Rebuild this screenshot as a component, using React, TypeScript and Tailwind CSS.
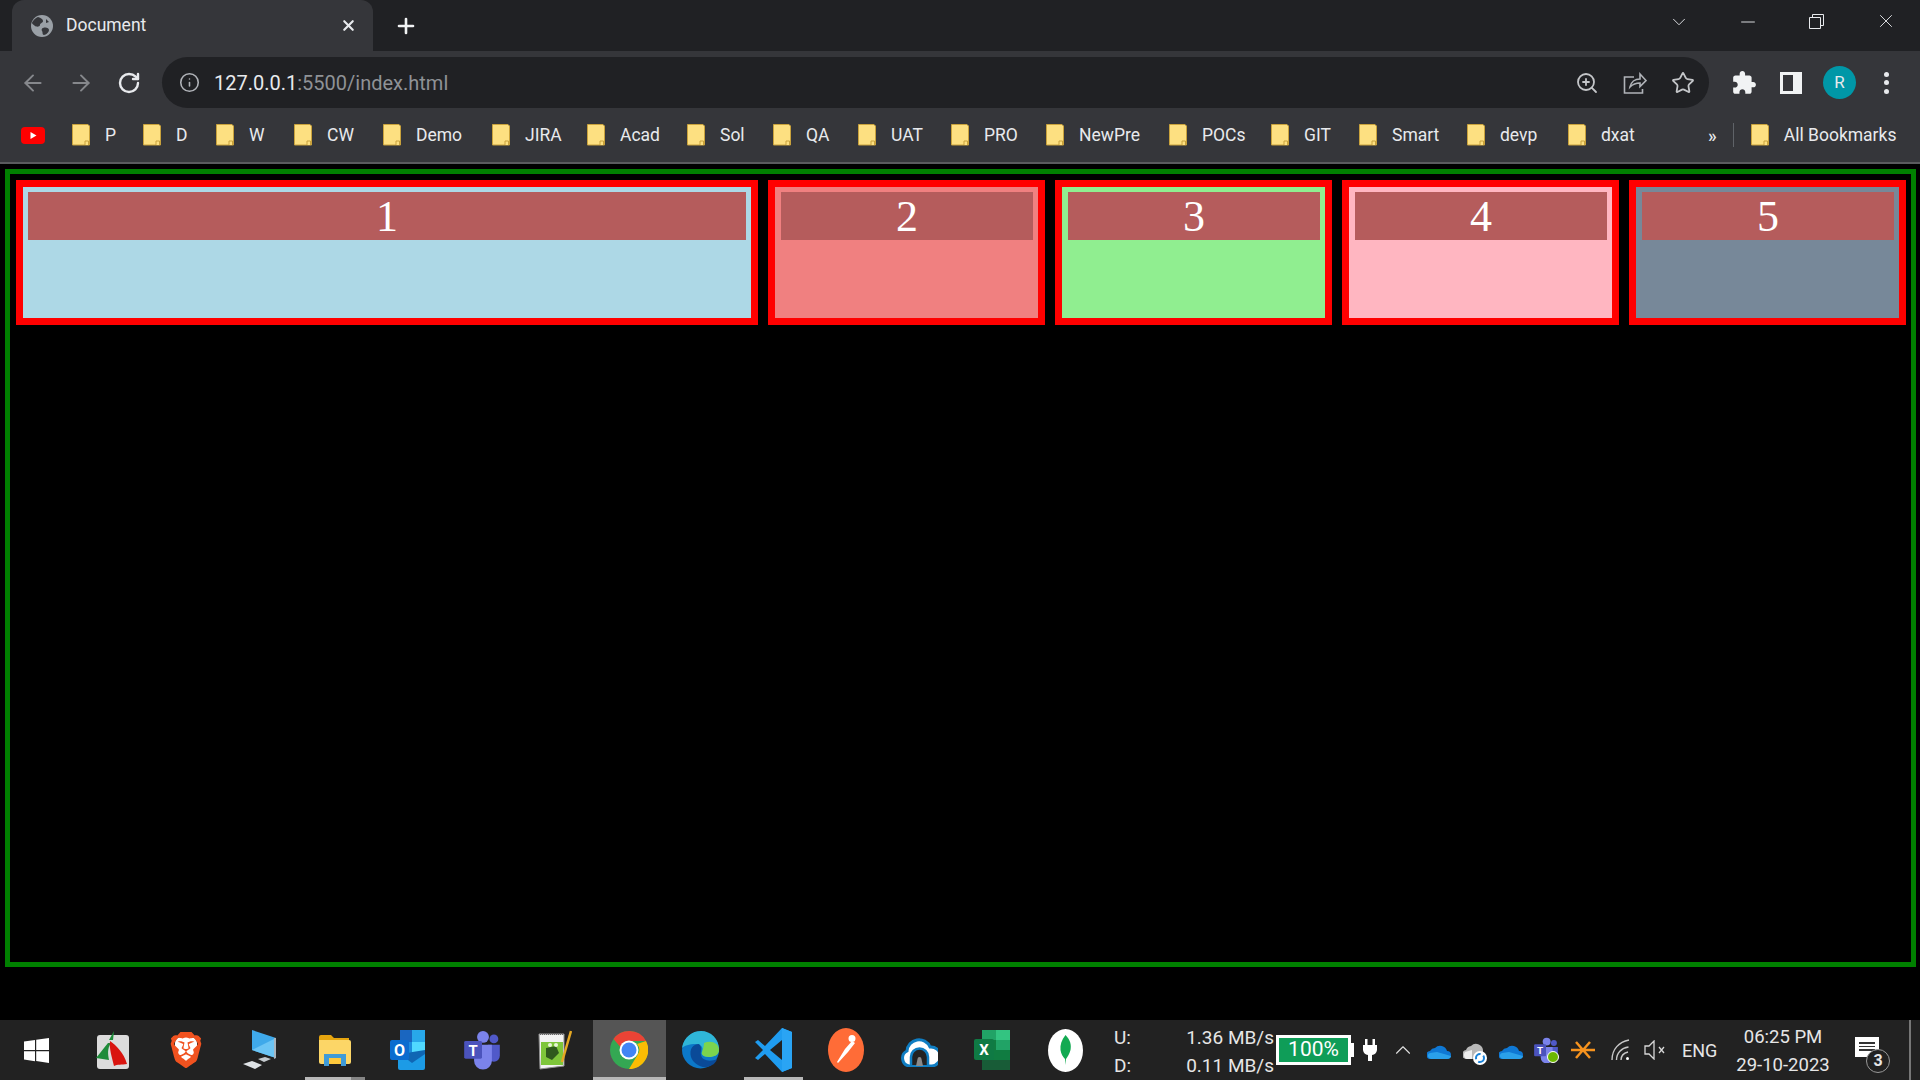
import React from "react";
import { ArrowLeft, ArrowRight, RotateCw, Info, ZoomIn, Star, X, Plus, ChevronDown, ChevronUp, Minus } from "lucide-react";
import { SiBrave } from "react-icons/si";

const bookmarks = [
  { label: "P", w: "w-[71px]" },
  { label: "D", w: "w-[73px]" },
  { label: "W", w: "w-[78px]" },
  { label: "CW", w: "w-[89px]" },
  { label: "Demo", w: "w-[109px]" },
  { label: "JIRA", w: "w-[95px]" },
  { label: "Acad", w: "w-[100px]" },
  { label: "Sol", w: "w-[86px]" },
  { label: "QA", w: "w-[85px]" },
  { label: "UAT", w: "w-[93px]" },
  { label: "PRO", w: "w-[95px]" },
  { label: "NewPre", w: "w-[123px]" },
  { label: "POCs", w: "w-[102px]" },
  { label: "GIT", w: "w-[88px]" },
  { label: "Smart", w: "w-[108px]" },
  { label: "devp", w: "w-[101px]" },
  { label: "dxat", w: "w-[140px]" },
];

const cards = [
  { n: 1, cls: "w-[742px] bg-[#add8e6] pl-[5px]" },
  { n: 2, cls: "flex-1 bg-[#f08080] pl-[6px]" },
  { n: 3, cls: "flex-1 bg-[#90ee90] pl-[6px]" },
  { n: 4, cls: "flex-1 bg-[#ffb6c1] pl-[6px]" },
  { n: 5, cls: "flex-1 bg-[#778899] pl-[6px]" },
];

const Folder = () => (
  <svg width="18" height="22" viewBox="0 0 18 22" className="shrink-0">
    <path d="M.5.5h15.500l1.500 1.500v19H.5z" fill="#fde081" stroke="#c9a23c" />
    <path d="M13 21v-4h3.500v4" fill="#fde081" stroke="#c9a23c" />
  </svg>
);

const Globe = () => (
  <svg width="22" height="22" viewBox="0 0 22 22">
    <circle cx="11" cy="11" r="11" fill="#9aa0a6" />
    <path d="M7 2c3 1 5 2 5 4s-3 2-3 4-4 2-5 1-3-2-3-3 3-5 6-6zM12 13c3-1 6 0 6 2s-3 5-5 5-1-3-2-4 0-3 1-3zM15 4l3 3-3 1z" fill="#35363a" />
  </svg>
);

const Share = () => (
  <svg width="24" height="22" viewBox="0 0 24 22" fill="none" stroke="#b0b3b8" strokeWidth="1.600">
    <path d="M11 5H1.500v16h18v-4" />
    <path d="M7 15c1-5 5-8 10-8V2l6 6.500-6 6V11c-4 0-7 1-10 4z" />
  </svg>
);

const Puzzle = () => (
  <svg width="26" height="26" viewBox="0 0 24 24" fill="#f1f3f4">
    <path d="M20.500 11H19V7c0-1.100-.9-2-2-2h-4V3.500C13 2.120 11.880 1 10.500 1S8 2.120 8 3.500V5H4c-1.100 0-1.990.9-1.990 2v3.800H3.500c1.490 0 2.700 1.210 2.700 2.700s-1.210 2.700-2.700 2.700H2V20c0 1.100.9 2 2 2h3.800v-1.500c0-1.490 1.210-2.700 2.700-2.700 1.490 0 2.700 1.210 2.700 2.700V22H17c1.100 0 2-.9 2-2v-4h1.500c1.380 0 2.500-1.120 2.500-2.500S21.880 11 20.500 11z" />
  </svg>
);

const Windows = () => (
  <svg width="25" height="25" viewBox="0 0 25 25" fill="#fff">
    <path d="M0 3.600 11 2v10H0zM12.200 1.800 25 0v12H12.200zM0 13.200h11v10L0 21.600zM12.200 13.200H25V25l-12.800-1.900z" />
  </svg>
);

const FastStone = () => (
  <svg width="34" height="38" viewBox="0 0 34 38">
    <rect x="1" y="4" width="32" height="34" rx="3" fill="#dcdcdc" />
    <path d="M12 12C7 18 4 22 0 27l13 2c-1-6-2-11 2-17z" fill="#1e8c3a" />
    <path d="M14 10c6 4 14 12 17 23-5 1-10 0-13 2-2-9-5-17-4-25z" fill="#d9140f" />
    <path d="M13 9l5-9-1 9z" fill="#1e8c3a" />
  </svg>
);

const Brave = () => (
  <div className="relative w-[30px] h-[36px]">
    <div className="absolute left-[4px] top-[5px] w-[22px] h-[24px] bg-white rounded-[6px]" />
    <SiBrave className="absolute -left-[3px] top-0 text-[#f1521f]" size={36} />
  </div>
);

const Computer = () => (
  <svg width="34" height="40" viewBox="0 0 34 40">
    <path d="M9 0l24 8v20L9 20z" fill="#3fa9ea" />
    <path d="M9 20l24-12v20z" fill="#6cc5f5" />
    <path d="M33 8v20l-2 1V8z" fill="#a8b4bd" />
    <path d="M0 34l9-3 10 4-7 4z" fill="#dfe3e6" />
    <path d="M15 29l7-2 6 2-7 3z" fill="#c5cace" />
  </svg>
);

const Explorer = () => (
  <svg width="32" height="32" viewBox="0 0 32 32">
    <path d="M0 3a2 2 0 0 1 2-2h10l3 3h15v6H0z" fill="#e6a50f" />
    <path d="M0 6h30a2 2 0 0 1 2 2v20a2 2 0 0 1-2 2H2a2 2 0 0 1-2-2z" fill="#fcd667" />
    <path d="M5 32V20h22v12h-5v-7H10v7z" fill="#3f9bd8" />
    <rect x="10" y="24" width="12" height="6" fill="#ffc93c" />
  </svg>
);

const Outlook = () => (
  <svg width="36" height="40" viewBox="0 0 36 40">
    <rect x="10" y="0" width="25" height="12" fill="#1a66c0" />
    <rect x="10" y="12" width="12" height="11" fill="#1b8bdd" />
    <rect x="22" y="0" width="13" height="12" fill="#28a8ea" />
    <rect x="22" y="12" width="13" height="11" fill="#50d9ff" />
    <path d="M8 22h27v16a2 2 0 0 1-2 2H10a2 2 0 0 1-2-2z" fill="#1c9be6" />
    <path d="M10 24l25-4v4L22 33z" fill="#0f66b4" />
    <rect x="0" y="10" width="19" height="20" rx="2" fill="#0a6ccf" />
    <text x="9.500" y="26" textAnchor="middle" fontSize="16" fontWeight="700" fill="#fff" fontFamily="Roboto, sans-serif">O</text>
  </svg>
);

const Teams = ({ size = 36 }: { size?: number }) => (
  <svg width={size} height={size * 1.1} viewBox="0 0 36 40">
    <circle cx="30" cy="9" r="4.500" fill="#5059c9" />
    <path d="M24 15h12v11a6 6 0 0 1-12 0z" fill="#5059c9" />
    <circle cx="19" cy="7" r="6" fill="#7b83eb" />
    <path d="M10 15h18v16a9 9 0 0 1-18 0z" fill="#7b83eb" />
    <rect x="0" y="11" width="18" height="18" rx="1.500" fill="#4b53bc" />
    <text x="9" y="26" textAnchor="middle" fontSize="15" fontWeight="700" fill="#fff" fontFamily="Roboto, sans-serif">T</text>
  </svg>
);

const NotepadPP = () => (
  <svg width="34" height="40" viewBox="0 0 34 40">
    <path d="M1 4h25v32L2 39z" fill="#f2f2f2" stroke="#8f8f8f" />
    <path d="M2 4h24" stroke="#666" strokeWidth="2" strokeDasharray="1 1" />
    <rect x="3" y="12" width="22" height="23" fill="#7ec63a" />
    <path d="M8 18l10-2 3 7-7 7-6-3z" fill="#2f5a1d" />
    <circle cx="12" cy="15" r="2" fill="#e8f5d8" />
    <circle cx="18" cy="15" r="2" fill="#e8f5d8" />
    <path d="M24 32L33 1" stroke="#e5a823" strokeWidth="2.500" />
  </svg>
);

const Chrome = () => (
  <svg width="38" height="38" viewBox="0 0 38 38">
    <circle cx="19" cy="19" r="19" fill="#34a853" />
    <path d="M19 0a19 19 0 0 1 17 10H19a9 9 0 0 0-8.600 6L3.500 8A19 19 0 0 1 19 0z" fill="#ea4335" />
    <path d="M36 10a19 19 0 0 1-17 28l8.500-14A9 9 0 0 0 27 13z" fill="#fbbc04" />
    <circle cx="19" cy="19" r="9.500" fill="#fff" />
    <circle cx="19" cy="19" r="7.500" fill="#4285f4" />
  </svg>
);

const Edge = () => (
  <svg width="37" height="38" viewBox="0 0 37 38">
    <circle cx="18.500" cy="19" r="18.500" fill="#0c78c8" />
    <path d="M0 17C2 6 10 0 19 0c10 0 18 8 18 18 0 6-5 8-10 8-6 0-8-3-7-5 2-4-1-8-6-8-7 0-12 2-14 4z" fill="#2fb6d8" />
    <path d="M22 12c7-3 15 0 15 7 0 5-5 7-10 7-6 0-8-3-7-5 1-3 2-6 2-9z" fill="#7bd44e" />
    <path d="M17 13c-6 0-10 5-8 13 2 6 9 11 16 10 5-1 9-4 10-8-6 3-15 2-16-4-1-4 2-7-2-11z" fill="#0a4a98" />
  </svg>
);

const VSCode = () => (
  <svg width="37" height="44" viewBox="0 0 37 44">
    <path d="M27 0l10 4v36l-10 4L10 26l-7 6-3-2 8-8-8-8 3-2 7 6z" fill="#1f9cf0" />
    <path d="M27 12L15 22l12 10z" fill="#222" />
    <path d="M27 0l10 4v36l-10 4z" fill="#2aa4f4" />
  </svg>
);

const Postman = () => (
  <svg width="36" height="44" viewBox="0 0 36 44">
    <ellipse cx="18" cy="22" rx="18" ry="22" fill="#ff6c37" />
    <path d="M9 34l8-13 7-8 3 2-7 9-10 11zM24 7a3.500 3.500 0 1 1 0 7 3.500 3.500 0 0 1 0-7z" fill="#fff" />
  </svg>
);

const CloudApp = () => (
  <svg width="37" height="34" viewBox="0 0 37 34">
    <path d="M8 33a8 8 0 0 1-2-15 12 12 0 0 1 23-4 9.500 9.500 0 0 1 2 19z" fill="#fff" stroke="#0f7dc2" strokeWidth="3" />
    <path d="M10 32V24a8.500 8.500 0 0 1 17 0v8" fill="#222" stroke="#0f7dc2" strokeWidth="2.500" />
    <path d="M15 33l1.500-7a2 2 0 0 1 4 0L22 33z" fill="#8a8a8a" />
  </svg>
);

const Excel = () => (
  <svg width="36" height="40" viewBox="0 0 36 40">
    <rect x="8" y="0" width="28" height="40" rx="2" fill="#107c41" />
    <rect x="22" y="0" width="14" height="10" fill="#33c481" />
    <rect x="8" y="0" width="14" height="10" fill="#21a366" />
    <rect x="22" y="10" width="14" height="10" fill="#21a366" />
    <rect x="22" y="20" width="14" height="10" fill="#107c41" />
    <rect x="8" y="30" width="28" height="10" fill="#185c37" />
    <rect x="0" y="9" width="20" height="21" rx="2" fill="#0f7a44" />
    <text x="10" y="25" textAnchor="middle" fontSize="15" fontWeight="700" fill="#fff" fontFamily="Roboto, sans-serif">X</text>
  </svg>
);

const Mongo = () => (
  <svg width="35" height="43" viewBox="0 0 35 43">
    <ellipse cx="17.500" cy="21.500" rx="17.500" ry="21.500" fill="#fff" />
    <path d="M17.500 6c5 5 6 10 5 15-1 4-3 7-4.500 9l-.5 6-.5-6C15 28 13 25 12.500 21c-.5-5 1-10 5-15z" fill="#13aa52" />
  </svg>
);

const taskIcons = [
  { el: <FastStone />, bar: "", cls: "" },
  { el: <Brave />, bar: "", cls: "" },
  { el: <Computer />, bar: "", cls: "" },
  { el: <Explorer />, bar: "explorer", cls: "ml-[2px]" },
  { el: <Outlook />, bar: "", cls: "" },
  { el: <Teams />, bar: "", cls: "" },
  { el: <NotepadPP />, bar: "", cls: "" },
  { el: <Chrome />, bar: "active", cls: "ml-[1px]" },
  { el: <Edge />, bar: "", cls: "-ml-[2px]" },
  { el: <VSCode />, bar: "open", cls: "" },
  { el: <Postman />, bar: "", cls: "-ml-[1px]" },
  { el: <CloudApp />, bar: "", cls: "" },
  { el: <Excel />, bar: "", cls: "-ml-[1px]" },
  { el: <Mongo />, bar: "", cls: "" },
];

const OneDrive = () => (
  <svg width="24" height="17" viewBox="0 0 24 17">
    <path d="M4 17a4 4 0 0 1-1-8 6 6 0 0 1 5-3 7 7 0 0 1 12 3 4 4 0 0 1 0 8z" fill="#0f78d4" />
    <path d="M4 17c-4-1-4-5-1-6l7-1 14 4c0 2-2 3-4 3z" fill="#2aa0ea" />
  </svg>
);

const GrayCloud = () => (
  <svg width="24" height="25" viewBox="0 0 24 25">
    <path d="M4 19a4.500 4.500 0 0 1-1-9 6 6 0 0 1 5-4 7 7 0 0 1 12 4v9z" fill="#b8b8b8" />
    <path d="M2 12l7-2v9H4c-3 0-4-5-2-7z" fill="#eee" />
    <circle cx="17" cy="18" r="7" fill="#fff" />
    <circle cx="17" cy="18" r="4" fill="none" stroke="#1a82d8" strokeWidth="2" strokeDasharray="8 3" />
  </svg>
);

const TeamsTray = () => (
  <div className="relative w-[25px] h-[26px]">
    <Teams size={24} />
    <span className="absolute right-0 bottom-0 w-[12px] h-[12px] rounded-full bg-[#6bb700] border border-white" />
  </div>
);

const OrangeTray = () => (
  <svg width="24" height="20" viewBox="0 0 24 20" stroke="#f7931e" strokeWidth="2.500" fill="none">
    <path d="M0 10h24M5 2l14 16M19 2L5 18" />
  </svg>
);

const Wifi = () => (
  <svg width="19" height="22" viewBox="0 0 19 22" fill="none" stroke="#c8c8c8" strokeWidth="1.400">
    <path d="M1 21C1 10 8 3 18 1M5.500 21c0-7 5-12 12-13M10 21c0-4 3-7 7-8" />
    <circle cx="16.500" cy="19.500" r="1.500" fill="#fff" stroke="none" />
  </svg>
);

const Speaker = () => (
  <svg width="21" height="20" viewBox="0 0 21 20" fill="none" stroke="#d8d8d8" strokeWidth="1.300">
    <path d="M1 6h4l5-5v18l-5-5H1zM15 7l5 6M20 7l-5 6" />
  </svg>
);

const Plug = () => (
  <svg width="14" height="22" viewBox="0 0 14 22" fill="#fff">
    <path d="M2 0h2.500v6h5V0H12v6h2v5a6 6 0 0 1-5 5v6H5v-6a6 6 0 0 1-5-5V6h2z" />
  </svg>
);

const App = () => {
  return (
    <div className="w-[1920px] h-[1080px] flex flex-col bg-black overflow-hidden font-['Roboto',sans-serif] text-white">
      {/* tab strip */}
      <div className="h-[51px] bg-[#202124] flex shrink-0">
        <div className="ml-[12px] w-[361px] h-full bg-[#35363a] rounded-t-[12px] flex items-center pl-[19px] pr-[16px]">
          <Globe />
          <span className="ml-[13px] text-[17.500px] text-[#e8eaed]">Document</span>
          <X className="ml-auto" size={17} strokeWidth={3} color="#e8eaed" />
        </div>
        <div className="ml-[21px] flex items-center">
          <Plus size={24} strokeWidth={2.600} color="#f1f3f4" />
        </div>
        <div className="ml-auto flex items-start pt-[11px]">
          <ChevronDown size={22} strokeWidth={1} color="#e8eaed" />
          <Minus className="ml-[47px]" size={22} strokeWidth={1} color="#e8eaed" />
          <svg className="ml-[50px] mt-[3px]" width="15" height="15" viewBox="0 0 15 15" fill="none" stroke="#e8eaed">
            <path d="M.5 3.500h11v11H.5zM3.500 3.500v-3h11v11h-3" />
          </svg>
          <X className="ml-[51px] mr-[23px] -mt-[1px]" size={22} strokeWidth={1} color="#e8eaed" />
        </div>
      </div>

      {/* toolbar */}
      <div className="h-[57px] pt-[6px] bg-[#35363a] flex items-center shrink-0">
        <ArrowLeft className="ml-[20px]" size={26} strokeWidth={1.800} color="#86888c" />
        <ArrowRight className="ml-[22px]" size={26} strokeWidth={1.800} color="#86888c" />
        <RotateCw className="ml-[23px]" size={24} strokeWidth={2.400} color="#e8eaed" />
        <div className="ml-[21px] w-[1547px] h-[51px] rounded-full bg-[#202124] flex items-center pl-[17px] pr-[14px]">
          <Info size={21} strokeWidth={1.800} color="#b0b3b8" />
          <span className="ml-[14px] text-[20px]">
            <span className="text-[#e8eaed]">127.0.0.1</span>
            <span className="text-[#8f9296]">:5500/index.html</span>
          </span>
          <ZoomIn className="ml-auto" size={24} strokeWidth={1.800} color="#c4c6c9" />
          <span className="ml-[24px]"><Share /></span>
          <Star className="ml-[24px]" size={24} strokeWidth={1.800} color="#c4c6c9" />
        </div>
        <span className="ml-[22px]"><Puzzle /></span>
        <div className="ml-[23px] w-[22px] h-[22px] bg-[#f1f3f4] flex">
          <div className="ml-[3px] mt-[3px] w-[10px] h-[16px] bg-[#35363a]" />
        </div>
        <div className="ml-[21px] w-[33px] h-[33px] rounded-full bg-[#0097a7] flex items-center justify-center text-[17px] text-[#e8eaed]">R</div>
        <div className="ml-[28px] flex flex-col gap-[3.500px]">
          <span className="w-[5px] h-[5px] rounded-full bg-[#e8eaed]" />
          <span className="w-[5px] h-[5px] rounded-full bg-[#e8eaed]" />
          <span className="w-[5px] h-[5px] rounded-full bg-[#e8eaed]" />
        </div>
      </div>

      {/* bookmarks */}
      <div className="h-[54px] bg-[#35363a] flex items-center shrink-0 pl-[21px]">
        <svg className="mr-[27px]" width="24" height="17" viewBox="0 0 24 17">
          <rect width="24" height="17" rx="4" fill="#f00" />
          <path d="M9.500 5l6 3.500-6 3.500z" fill="#fff" />
        </svg>
        {bookmarks.map((b) => (
          <div key={b.label} className={`${b.w} shrink-0 flex items-center gap-[15px]`}>
            <Folder />
            <span className="text-[17.500px] text-[#e8eaed]">{b.label}</span>
          </div>
        ))}
        <span className="text-[18px] text-[#e8eaed] font-medium">»</span>
        <div className="ml-[16px] w-px h-[24px] bg-[#5f6368]" />
        <div className="ml-[17px] flex items-center gap-[15px]">
          <Folder />
          <span className="text-[17.500px] text-[#e8eaed]">All Bookmarks</span>
        </div>
      </div>
      <div className="h-[2px] bg-[#5a5b5e] shrink-0" />

      {/* page */}
      <div className="flex-1 pt-[5px] pl-[5px] pr-[4px] pb-[53px] min-h-0">
        <div className="h-full border-[5px] border-[#008000] pt-[6px] pl-[6px] pr-[5px] flex items-start gap-[10px] font-['Liberation_Serif',serif]">
          {cards.map((c) => (
            <div key={c.n} className={`${c.cls} h-[145px] border-[7px] border-[#ff0000] pt-[5px] pr-[5px]`}>
              <div className="h-[48px] pt-[1px] bg-[#b55c5c] flex items-center justify-center text-[44px] leading-none text-white">
                {c.n}
              </div>
            </div>
          ))}
        </div>
      </div>

      {/* taskbar */}
      <div className="h-[60px] bg-[#222222] flex items-center shrink-0">
        <div className="flex h-full w-[1100px] shrink-0">
          <div className="w-[76.500px] h-full shrink-0 flex items-center pl-[24px]">
            <Windows />
          </div>
          {taskIcons.map((t, i) => (
            <div key={i} className={`relative w-[73.300px] shrink-0 h-full flex items-center justify-center ${t.cls} ${t.bar === "active" ? "bg-[#555555]" : ""}`}>
              {t.el}
              {t.bar === "active" && <span className="absolute left-0 right-0 bottom-0 h-[3px] bg-[#b8b8b8]" />}
              {t.bar === "open" && <span className="absolute left-[7px] right-[7px] bottom-0 h-[3px] bg-[#b8b8b8]" />}
              {t.bar === "explorer" && (
                <span className="absolute left-[7px] right-[7px] bottom-0 h-[3px] bg-[#b8b8b8] flex justify-end">
                  <span className="w-[14px] h-full bg-[#858585]" />
                </span>
              )}
            </div>
          ))}
        </div>
        <div className="w-[176px] pl-[14px] pr-[2px] pt-[3px] shrink-0 flex justify-between text-[19px] text-[#e6e6e6] leading-[28px]">
          <div className="flex flex-col">
            <span>U:</span>
            <span>D:</span>
          </div>
          <div className="flex flex-col items-end">
            <span>1.36 MB/s</span>
            <span>0.11 MB/s</span>
          </div>
        </div>
        <div className="w-[75px] h-[30px] border-[3px] border-white bg-[#0f9d58] flex items-center justify-center text-[21px] shrink-0">100%</div>
        <div className="w-[3px] h-[14px] bg-white shrink-0" />
        <span className="ml-[9px]"><Plug /></span>
        <ChevronUp className="ml-[13px]" size={26} strokeWidth={1} color="#e0e0e0" />
        <span className="ml-[11px]"><OneDrive /></span>
        <span className="ml-[12px] mt-[4px]"><GrayCloud /></span>
        <span className="ml-[12px]"><OneDrive /></span>
        <span className="ml-[11px]"><TeamsTray /></span>
        <span className="ml-[12px]"><OrangeTray /></span>
        <span className="ml-[16px]"><Wifi /></span>
        <span className="ml-[14px]"><Speaker /></span>
        <span className="ml-[17px] text-[18px] text-[#e6e6e6] w-[36px]">ENG</span>
        <div className="ml-[17px] w-[96px] pt-[2px] flex flex-col items-center text-[18.500px] text-[#e6e6e6] leading-[28px]">
          <span>06:25 PM</span>
          <span>29-10-2023</span>
        </div>
        <div className="relative ml-[24px] w-[24px] h-[24px] -mt-[2px]">
          <div className="w-[24px] h-[20px] bg-white flex flex-col gap-[2px] px-[4px] pt-[5px]">
            <span className="h-[1.500px] bg-[#333]" />
            <span className="h-[1.500px] bg-[#333]" />
            <span className="h-[1.500px] bg-[#333]" />
          </div>
          <span className="absolute left-[11px] top-[12px] w-[24px] h-[24px] rounded-full bg-[#222222] border border-[#999] flex items-center justify-center text-[16px] font-bold text-[#e6e6e6]">3</span>
        </div>
        <div className="ml-[30px] w-[2px] h-full bg-[#777]" />
      </div>
    </div>
  );
};

export default App;
